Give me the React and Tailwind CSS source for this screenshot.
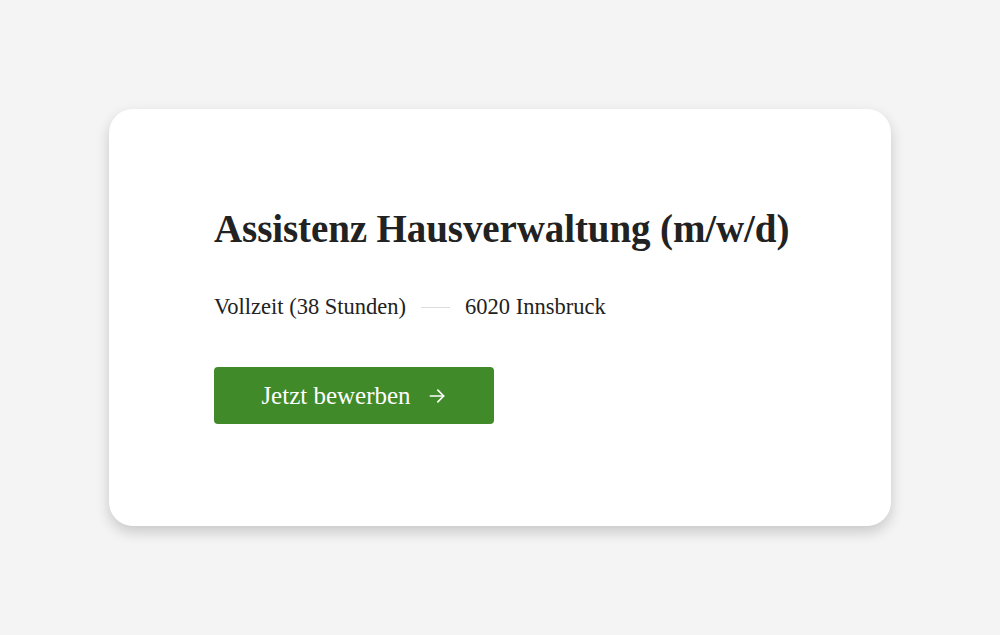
// Stellenanzeige — Karte mit Titel, Eckdaten und Bewerben-Button

const SERIF = { fontFamily: '"Liberation Serif", "DejaVu Serif", serif' }

function Pfeil() {
  return (
    <svg width="20" height="20" viewBox="0 0 24 24" fill="none" stroke="currentColor" strokeWidth="2" strokeLinecap="round" strokeLinejoin="round">
      <path d="M4 12h16" />
      <path d="M13 5l7 7-7 7" />
    </svg>
  )
}

export default function App() {
  return (
    <div className="min-h-[635px] w-full bg-[#f4f4f4] flex items-center justify-center" style={SERIF}>
      <div className="w-[782px] h-[417px] bg-white rounded-[24px] shadow-[0_6px_14px_rgba(0,0,0,0.18)] pl-[105px] pt-[96px]">
        <h1 className="text-[39px] leading-[48px] font-bold text-[#222] tracking-[-0.1px]">
          Assistenz Hausverwaltung (m/w/d)
        </h1>

        <div className="mt-[40px] flex items-center text-[22.5px] leading-[28px] text-[#222]">
          <span>Vollzeit (38 Stunden)</span>
          <span className="mx-[15px] w-[29px] h-px bg-[#dcdcdc]" />
          <span>6020 Innsbruck</span>
        </div>

        <button className="mt-[46px] w-[280px] h-[57px] rounded-[4px] bg-[#418a2a] text-white flex items-center justify-center gap-[16px] text-[25px]">
          <span>Jetzt bewerben</span>
          <Pfeil />
        </button>
      </div>
    </div>
  )
}
